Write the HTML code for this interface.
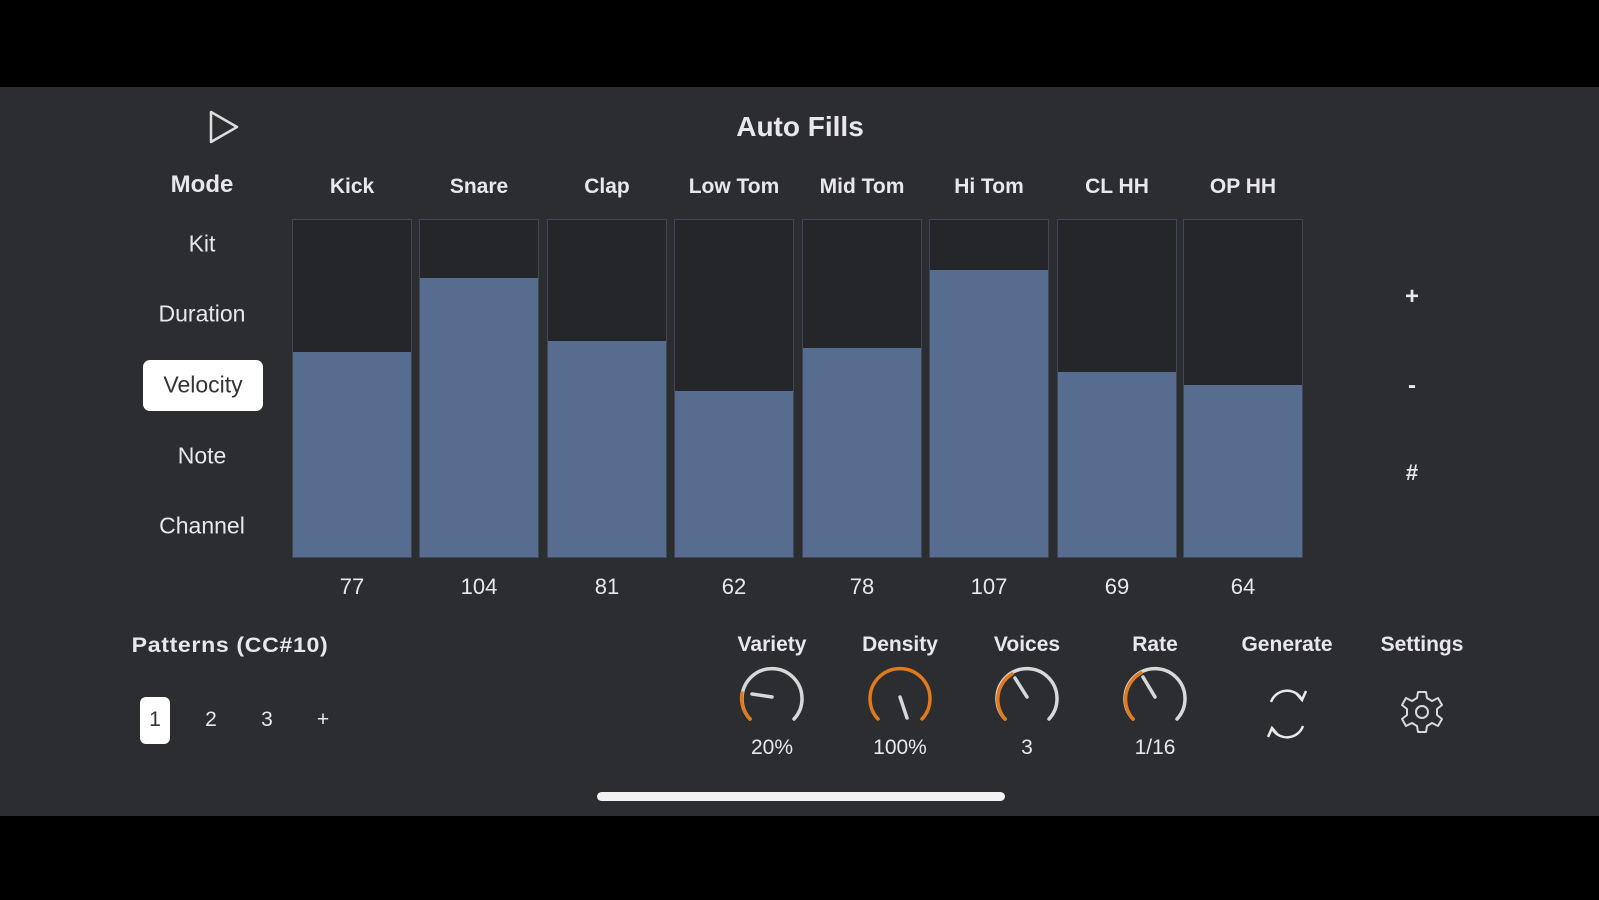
<!DOCTYPE html>
<html><head><meta charset="utf-8"><style>
html,body{margin:0;padding:0;width:1599px;height:900px;overflow:hidden;background:#000;font-family:"Liberation Sans",sans-serif;color:#e8e8ea}
#app{position:absolute;left:0;top:87px;width:1599px;height:729px;background:#2c2d31}
.t{position:absolute;transform:translate(-50%,-50%);white-space:nowrap}
.b{font-weight:bold}
.bar{position:absolute;top:219px;width:120px;height:339px;border:1.5px solid #3f4759;background:#25262a;box-sizing:border-box}
.bar div{position:absolute;left:0;right:0;bottom:0;background:#566d8f}
</style></head><body>
<div id="app"></div>
<svg style="position:absolute;left:0;top:0" width="1599" height="900">
<path d="M211 112 L237 127 L211 142 Z" fill="none" stroke="#ddd" stroke-width="2.5" stroke-linejoin="round"/>
<rect x="597" y="792" width="408" height="9" rx="4.5" fill="#f2f2f2"/>
<g fill="none" stroke-width="3.5" stroke-linecap="round">
 <path d="M750 719 A30 30 0 1 1 794 719" stroke="#d8d8d8"/>
 <path d="M750 719 A30 30 0 0 1 742 693" stroke="#e07a1c"/>
 <line x1="772" y1="697" x2="752" y2="694" stroke="#d8d8d8"/>
 <path d="M878 719 A30 30 0 1 1 922 719" stroke="#e07a1c"/>
 <line x1="900" y1="697" x2="907" y2="718" stroke="#d8d8d8"/>
 <path d="M1005 719 A30 30 0 1 1 1049 719" stroke="#d8d8d8"/>
 <path d="M1005 719 A30 30 0 0 1 1012 674" stroke="#e07a1c"/>
 <line x1="1027" y1="697" x2="1015" y2="678" stroke="#d8d8d8"/>
 <path d="M1133 719 A30 30 0 1 1 1177 719" stroke="#d8d8d8"/>
 <path d="M1133 719 A30 30 0 0 1 1141 673" stroke="#e07a1c"/>
 <line x1="1155" y1="697" x2="1143" y2="677" stroke="#d8d8d8"/>
</g>
<g fill="none" stroke="#e8e8e8" stroke-width="2.5">
 <path d="M1271 702 A17 17 0 0 1 1301 698"/>
 <path d="M1303 726 A17 17 0 0 1 1273 730"/>
 <path d="M1296 693 L1302 700 L1306 691" />
 <path d="M1278 735 L1272 728 L1268 737"/>
</g>
<g transform="translate(1422,712)" fill="none" stroke="#d8d8d8" stroke-width="2">
 <path d="M-4 -20 L4 -20 L5 -14 L10 -11 L16 -14 L20 -7 L15 -3 L15 3 L20 7 L16 14 L10 11 L5 14 L4 20 L-4 20 L-5 14 L-10 11 L-16 14 L-20 7 L-15 3 L-15 -3 L-20 -7 L-16 -14 L-10 -11 L-5 -14 Z" stroke-linejoin="round"/>
 <circle r="6"/>
</g>
</svg>
<div class="t b" style="left:800px;top:127px;font-size:28px">Auto Fills</div>
<div class="t b" style="left:202px;top:185px;font-size:24px">Mode</div>
<div class="t" style="left:202px;top:244px;font-size:23px">Kit</div>
<div class="t" style="left:202px;top:314px;font-size:23px">Duration</div>
<div style="position:absolute;left:143px;top:360px;width:120px;height:51px;background:#fff;border-radius:7px"></div>
<div class="t" style="left:203px;top:385px;font-size:23px;color:#333">Velocity</div>
<div class="t" style="left:202px;top:456px;font-size:23px">Note</div>
<div class="t" style="left:202px;top:526px;font-size:23px">Channel</div>

<div class="t b" style="left:352px;top:187px;font-size:21px">Kick</div>
<div class="t b" style="left:479px;top:187px;font-size:21px">Snare</div>
<div class="t b" style="left:607px;top:187px;font-size:21px">Clap</div>
<div class="t b" style="left:734px;top:187px;font-size:21px">Low Tom</div>
<div class="t b" style="left:862px;top:187px;font-size:21px">Mid Tom</div>
<div class="t b" style="left:989px;top:187px;font-size:21px">Hi Tom</div>
<div class="t b" style="left:1117px;top:187px;font-size:21px">CL HH</div>
<div class="t b" style="left:1243px;top:187px;font-size:21px">OP HH</div>

<div class="bar" style="left:292px"><div style="height:205px"></div></div>
<div class="bar" style="left:419px"><div style="height:279px"></div></div>
<div class="bar" style="left:547px"><div style="height:216px"></div></div>
<div class="bar" style="left:674px"><div style="height:166px"></div></div>
<div class="bar" style="left:802px"><div style="height:209px"></div></div>
<div class="bar" style="left:929px"><div style="height:287px"></div></div>
<div class="bar" style="left:1057px"><div style="height:185px"></div></div>
<div class="bar" style="left:1183px"><div style="height:172px"></div></div>

<div class="t" style="left:352px;top:587px;font-size:22px">77</div>
<div class="t" style="left:479px;top:587px;font-size:22px">104</div>
<div class="t" style="left:607px;top:587px;font-size:22px">81</div>
<div class="t" style="left:734px;top:587px;font-size:22px">62</div>
<div class="t" style="left:862px;top:587px;font-size:22px">78</div>
<div class="t" style="left:989px;top:587px;font-size:22px">107</div>
<div class="t" style="left:1117px;top:587px;font-size:22px">69</div>
<div class="t" style="left:1243px;top:587px;font-size:22px">64</div>

<div class="t b" style="left:1412px;top:297px;font-size:24px">+</div>
<div class="t b" style="left:1412px;top:386px;font-size:24px">-</div>
<div class="t b" style="left:1412px;top:473px;font-size:22px">#</div>

<div class="t b" style="left:230px;top:646px;font-size:21px;letter-spacing:0.6px;transform:translate(-50%,-50%) scaleX(1.1)">Patterns (CC#10)</div>
<div style="position:absolute;left:140px;top:697px;width:30px;height:47px;background:#fff;border-radius:6px"></div>
<div class="t" style="left:155px;top:720px;font-size:21px;color:#333">1</div>
<div class="t" style="left:211px;top:720px;font-size:21px">2</div>
<div class="t" style="left:267px;top:720px;font-size:21px">3</div>
<div class="t" style="left:323px;top:720px;font-size:21px">+</div>

<div class="t b" style="left:772px;top:645px;font-size:21px">Variety</div>
<div class="t b" style="left:900px;top:645px;font-size:21px">Density</div>
<div class="t b" style="left:1027px;top:645px;font-size:21px">Voices</div>
<div class="t b" style="left:1155px;top:645px;font-size:21px">Rate</div>
<div class="t b" style="left:1287px;top:645px;font-size:21px">Generate</div>
<div class="t b" style="left:1422px;top:645px;font-size:21px">Settings</div>
<div class="t" style="left:772px;top:748px;font-size:21px">20%</div>
<div class="t" style="left:900px;top:748px;font-size:21px">100%</div>
<div class="t" style="left:1027px;top:748px;font-size:21px">3</div>
<div class="t" style="left:1155px;top:748px;font-size:21px">1/16</div>
</body></html>
